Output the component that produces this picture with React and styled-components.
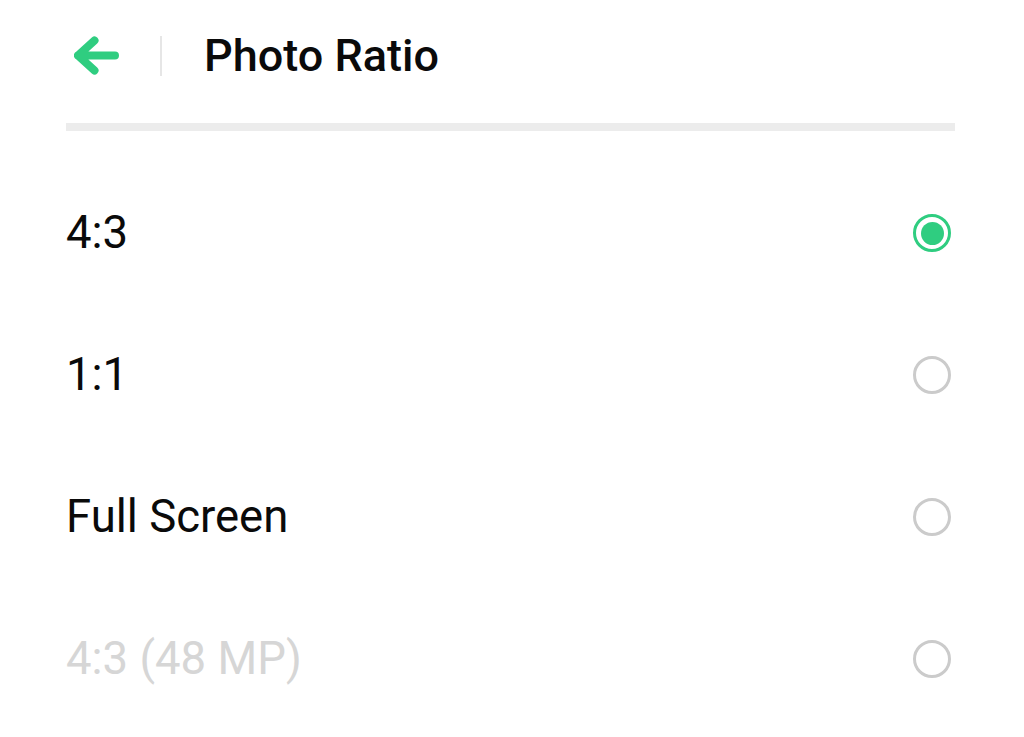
import React, { useState } from "react";
import styled, { createGlobalStyle } from "styled-components";

const Global = createGlobalStyle`
  html, body { margin: 0; padding: 0; background: #ffffff; }
  body { font-family: Roboto, "Noto Sans", Arial, sans-serif; }
`;

const GREEN = "#2fcd80";

const Page = styled.div`
  width: 1024px;
  height: 737px;
  background: #ffffff;
  overflow: hidden;
  display: flex;
  flex-direction: column;
`;

const Header = styled.header`
  height: 123px;
  display: flex;
  align-items: center;
  padding-left: 74px;
  box-sizing: border-box;
  padding-bottom: 12px;
`;

const BackButton = styled.button`
  border: 0;
  background: none;
  padding: 0;
  margin: 0;
  width: 46px;
  height: 40px;
  display: flex;
  cursor: pointer;
`;

const VDivider = styled.div`
  width: 2px;
  height: 40px;
  background: #e6e6e6;
  margin-left: 40px;
  margin-right: 42px;
`;

const Title = styled.h1`
  margin: 0;
  font-size: 45px;
  font-weight: 500;
  color: #0a0a0a;
  letter-spacing: 0;
  line-height: 1;
`;

const Bar = styled.div`
  height: 8px;
  margin: 0 69px 0 66px;
  background: #ececec;
`;

const List = styled.ul`
  list-style: none;
  margin: 0;
  padding: 31px 69px 0 66px;
`;

const Row = styled.li`
  height: 142px;
  display: flex;
  align-items: center;
  justify-content: space-between;
  cursor: ${(p) => (p.$disabled ? "default" : "pointer")};
`;

const Label = styled.span`
  font-size: 45.5px;
  font-weight: 400;
  color: ${(p) => (p.$disabled ? "#d6d6d6" : "#0a0a0a")};
  line-height: 1;
`;

const Radio = styled.span`
  width: 38px;
  height: 38px;
  margin-right: 4px;
  box-sizing: border-box;
  border-radius: 50%;
  border: 3.5px solid ${(p) => (p.$checked ? GREEN : "#cbcbcb")};
  display: flex;
  align-items: center;
  justify-content: center;
  &::after {
    content: "";
    width: 23px;
    height: 23px;
    border-radius: 50%;
    background: ${GREEN};
    display: ${(p) => (p.$checked ? "block" : "none")};
  }
`;

const options = [
  { id: "43", label: "4:3" },
  { id: "11", label: "1:1" },
  { id: "full", label: "Full Screen" },
  { id: "48", label: "4:3 (48 MP)", disabled: true },
];

export default function App() {
  const [value, setValue] = useState("43");
  return (
    <Page>
      <Global />
      <Header>
        <BackButton aria-label="Back">
          <svg width="46" height="40" viewBox="0 0 46 40" fill="none">
            <path
              d="M4 19.5 H41 M4 19.5 L20.5 4.5 M4 19.5 L20.5 34.5"
              stroke={GREEN}
              strokeWidth="8"
              strokeLinecap="round"
              strokeLinejoin="round"
            />
          </svg>
        </BackButton>
        <VDivider />
        <Title>Photo Ratio</Title>
      </Header>
      <Bar />
      <List>
        {options.map((o) => (
          <Row
            key={o.id}
            $disabled={o.disabled}
            onClick={() => !o.disabled && setValue(o.id)}
          >
            <Label $disabled={o.disabled}>{o.label}</Label>
            <Radio $checked={value === o.id} />
          </Row>
        ))}
      </List>
    </Page>
  );
}
